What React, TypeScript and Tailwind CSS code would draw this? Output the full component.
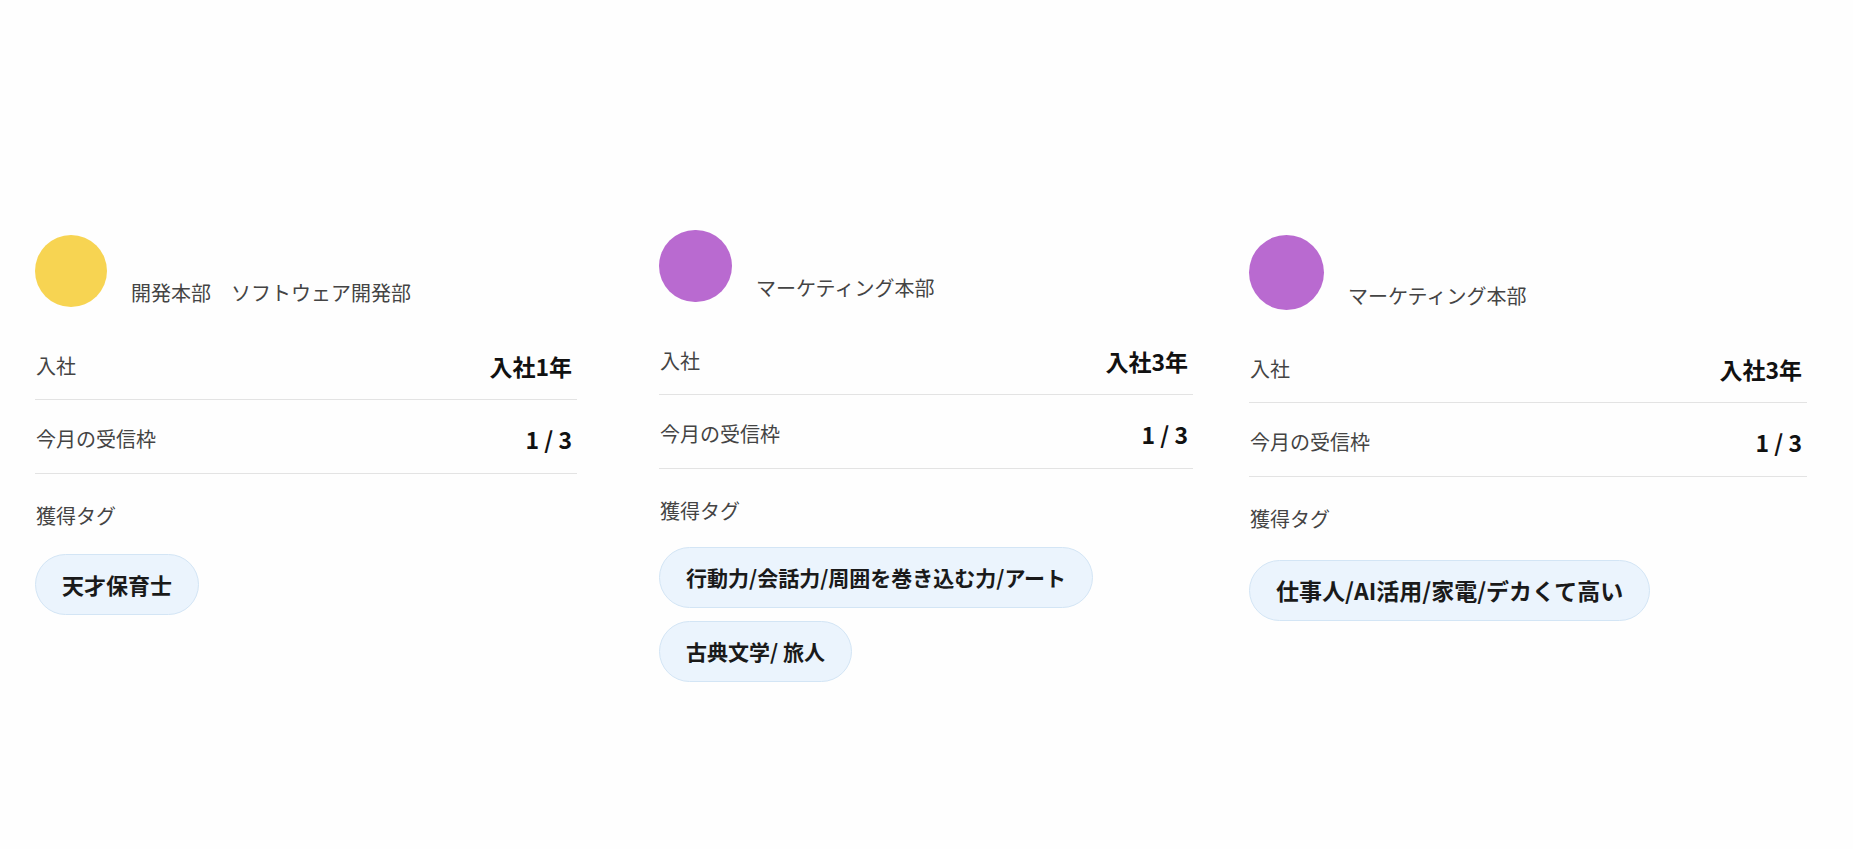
import React from 'react';

interface MemberCardProps {
    avatar: string;
    department: string;
    tenure: string;
    quota: string;
    tags: string[];
    className?: string;
    tagsClassName?: string;
    tagText?: string;
}

const MemberCard: React.FC<MemberCardProps> = ({ avatar, department, tenure, quota, tags, className, tagsClassName, tagText }) => {
    return (
        <div className={`flex flex-col shrink-0 ${className ?? ''}`}>
            {/* Avatar + department */}
            <div className="flex items-end">
                <div className={`rounded-full shrink-0 ${avatar}`} />
                <span className="ml-[24px] text-[20px] leading-[28px] text-[#444444]">
                    {department}
                </span>
            </div>

            {/* Info rows */}
            <div className="mt-[45px] flex items-center justify-between pb-[19px] border-b border-[#e3e3e3]">
                <span className="pl-px text-[20px] leading-[28px] text-[#444444]">入社</span>
                <span className="pr-[5px] text-[23px] leading-[28px] font-bold text-[#111111]">{tenure}</span>
            </div>
            <div className="flex items-center justify-between pt-[25px] pb-[20px] border-b border-[#e3e3e3]">
                <span className="pl-px text-[20px] leading-[28px] text-[#444444]">今月の受信枠</span>
                <span className="pr-[5px] text-[23px] leading-[28px] font-bold text-[#111111]">{quota}</span>
            </div>

            {/* Tags */}
            <span className="mt-[28px] pl-px text-[20px] leading-[28px] text-[#444444]">獲得タグ</span>
            <div className={`flex flex-col items-start gap-[13px] ${tagsClassName ?? 'mt-[24px]'}`}>
                {tags.map((tag) => (
                    <span
                        key={tag}
                        className={`h-[61px] px-[26px] flex items-center rounded-full bg-[#ebf4fd] border border-[#d3e5f5] font-bold text-[#1a1a1a] whitespace-nowrap ${tagText ?? 'text-[22px]'}`}
                    >
                        {tag}
                    </span>
                ))}
            </div>
        </div>
    );
};

export default function App() {
    return (
        <div
            className="w-full min-h-[849px] bg-[#fefefe] flex items-start pl-[35px]"
            style={{ fontFamily: '"Noto Sans CJK JP", "Noto Sans", sans-serif' }}
        >
            <MemberCard
                className="w-[542px] mt-[235px]"
                avatar="w-[72px] h-[72px] bg-[#f7d452]"
                department="開発本部　ソフトウェア開発部"
                tenure="入社1年"
                quota="1 / 3"
                tags={['天才保育士']}
            />
            <MemberCard
                className="w-[534px] mt-[230px] ml-[82px]"
                avatar="w-[73px] h-[72px] bg-[#b96ad0]"
                department="マーケティング本部"
                tenure="入社3年"
                quota="1 / 3"
                tags={['行動力/会話力/周囲を巻き込む力/アート', '古典文学/ 旅人']}
                tagsClassName="mt-[22px]"
                tagText="text-[21px]"
            />
            <MemberCard
                className="w-[558px] mt-[235px] ml-[56px]"
                avatar="w-[75px] h-[75px] bg-[#b96ad0]"
                department="マーケティング本部"
                tenure="入社3年"
                quota="1 / 3"
                tags={['仕事人/AI活用/家電/デカくて高い']}
                tagsClassName="mt-[27px]"
                tagText="text-[23px]"
            />
        </div>
    );
}
